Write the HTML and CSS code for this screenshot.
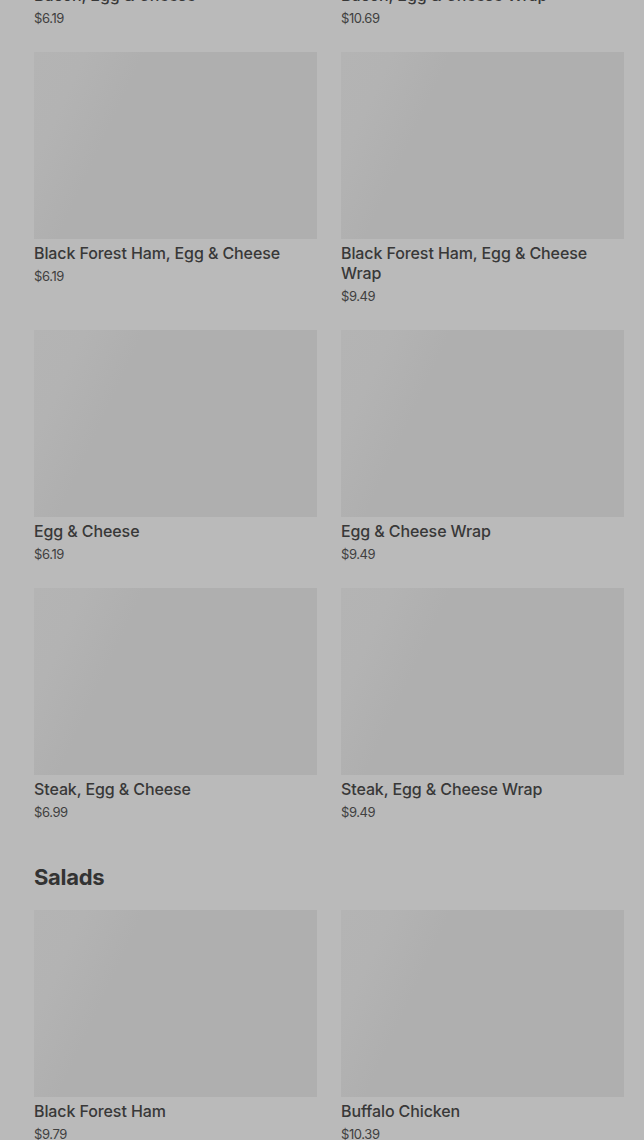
FILE: index.html
```html
<!DOCTYPE html>
<html lang="en">
<head>
    <meta charset="UTF-8">
    <meta name="viewport" content="width=device-width, initial-scale=1.0">
    <title>Menu</title>
    <link rel="stylesheet" href="styles.css">
</head>
<body>

<div class="menu">
    <section class="category first">
        <div class="items">
            <div class="item">
                <div class="thumb"></div>
                <div class="name">Bacon, Egg &amp; Cheese</div>
                <div class="price">$6.19</div>
            </div>
            <div class="item">
                <div class="thumb"></div>
                <div class="name">Bacon, Egg &amp; Cheese Wrap</div>
                <div class="price">$10.69</div>
            </div>
            <div class="item">
                <div class="thumb"></div>
                <div class="name">Black Forest Ham, Egg &amp; Cheese</div>
                <div class="price">$6.19</div>
            </div>
            <div class="item">
                <div class="thumb"></div>
                <div class="name">Black Forest Ham, Egg &amp; Cheese Wrap</div>
                <div class="price">$9.49</div>
            </div>
            <div class="item">
                <div class="thumb"></div>
                <div class="name">Egg &amp; Cheese</div>
                <div class="price">$6.19</div>
            </div>
            <div class="item">
                <div class="thumb"></div>
                <div class="name">Egg &amp; Cheese Wrap</div>
                <div class="price">$9.49</div>
            </div>
            <div class="item">
                <div class="thumb"></div>
                <div class="name">Steak, Egg &amp; Cheese</div>
                <div class="price">$6.99</div>
            </div>
            <div class="item">
                <div class="thumb"></div>
                <div class="name">Steak, Egg &amp; Cheese Wrap</div>
                <div class="price">$9.49</div>
            </div>
        </div>
    </section>

    <section class="category">
        <h2>Salads</h2>
        <div class="items">
            <div class="item">
                <div class="thumb"></div>
                <div class="name">Black Forest Ham</div>
                <div class="price">$9.79</div>
            </div>
            <div class="item">
                <div class="thumb"></div>
                <div class="name">Buffalo Chicken</div>
                <div class="price">$10.39</div>
            </div>
        </div>
    </section>
</div>

</body>
</html>
```

FILE: styles.css
```css
body {
    font-family: Inter, "Noto Sans", sans-serif;
    background-color: #bababa;
    color: #363636;
    margin: 0;
    overflow: hidden;
}
.menu {
    padding: 0 20px 0 34px;
    margin-top: -206px; /* page is scrolled */
}
.category {
    margin-top: 41px;
}
.category.first {
    margin-top: 0;
}
h2 {
    margin: 0 0 18px;
    font-size: 22px;
    line-height: 30px;
    font-weight: 700;
    letter-spacing: -0.3px;
    color: #333;
}
.items {
    display: grid;
    grid-template-columns: 1fr 1fr;
    column-gap: 24px;
    row-gap: 25px;
}
.thumb {
    height: 187px;
    background: linear-gradient(115deg, #b4b4b4 0%, #b3b3b3 14%, #afafaf 30%, #afafaf 100%);
}
.name {
    margin-top: 4px;
    font-size: 16px;
    line-height: 20px;
    font-weight: 500;
    letter-spacing: -0.1px;
    color: #383838;
}
.price {
    margin-top: 4px;
    font-size: 13px;
    line-height: 18px;
    letter-spacing: -0.4px;
    color: #404040;
}
```
